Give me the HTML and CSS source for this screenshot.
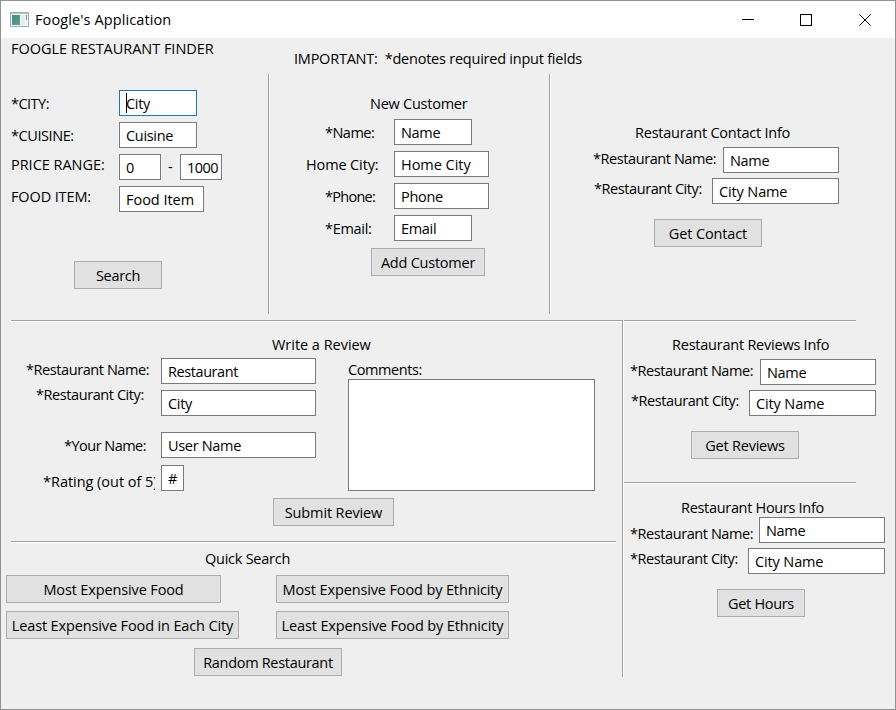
FILE: index.html
```html
<!DOCTYPE html>
<html lang="en">
<head>
<meta charset="utf-8">
<title>Foogle's Application</title>
<link rel="stylesheet" href="styles.css">
</head>
<body>
<div class="window">
  <header class="titlebar">
    <svg class="app-icon" width="19" height="15" viewBox="0 0 19 15">
      <defs><linearGradient id="g" x1="0" y1="0" x2="1" y2="1"><stop offset="0" stop-color="#3f8d86"/><stop offset="1" stop-color="#5f9f8c"/></linearGradient></defs>
      <rect x="0.5" y="0.5" width="18" height="14" fill="#f4f7f8" stroke="#a3abb0"/>
      <rect x="1" y="1" width="17" height="1" fill="#b9c6cc"/>
      <rect x="2" y="3" width="8" height="10" fill="url(#g)"/>
      <rect x="11" y="3" width="4" height="10" fill="#e6eeee"/>
      <rect x="16" y="3" width="1" height="5" fill="#5b978f"/>
    </svg>
    <span class="title">Foogle's Application</span>
    <svg class="controls" width="132" height="14" viewBox="0 0 132 14" fill="none" stroke="#000" stroke-width="1">
      <path d="M0 6.5H12" shape-rendering="crispEdges"/>
      <rect x="58.5" y="1.5" width="11" height="11" shape-rendering="crispEdges"/>
      <path d="M117.3 1.3L128.7 12.7M128.7 1.3L117.3 12.7"/>
    </svg>
  </header>

  <main class="content">
    <section class="top">
      <div class="finder">
        <h1 class="s0">FOOGLE RESTAURANT FINDER</h1>
        <div class="row"><label class="s5">*CITY:</label><span class="focus"><input class="w78 s3" value="City"><i class="caret"></i></span></div>
        <div class="row"><label class="s4">*CUISINE:</label><input class="w78 s3" value="Cuisine"></div>
        <div class="row up"><label class="s0">PRICE RANGE:</label><input class="w42" value="0"><span class="dash">-</span><input class="w42 s5 max" value="1000"></div>
        <div class="row up"><label class="s1">FOOD ITEM:</label><input class="w85 s0" value="Food Item"></div>
        <button class="w88 s3 search">Search</button>
      </div>
      <div class="rest">
        <p class="notice">IMPORTANT:&nbsp; *denotes required input fields</p>
        <div class="panels">
          <div class="customer">
            <h2 class="s2">New Customer</h2>
            <div class="row"><label class="in s5">*Name:</label><input class="w78 s3" value="Name"></div>
            <div class="row"><label class="s1">Home City:</label><input class="w95 s0" value="Home City"></div>
            <div class="row"><label class="in s6">*Phone:</label><input class="w95 s3" value="Phone"></div>
            <div class="row"><label class="in s3">*Email:</label><input class="w78 s3" value="Email"></div>
            <button class="w114">Add Customer</button>
          </div>
          <div class="info contact">
            <h2>Restaurant Contact Info</h2>
            <div class="row"><label class="s4">*Restaurant Name:</label><input class="w116 s3" value="Name"></div>
            <div class="row"><label class="s4 city">*Restaurant City:</label><input class="w127 s1" value="City Name"></div>
            <button class="w108 s1">Get Contact</button>
          </div>
        </div>
      </div>
    </section>

    <section class="bottom">
      <div class="left">
        <div class="review">
          <h2 class="s0">Write a Review</h2>
          <div class="review-body">
            <div class="fields">
              <div class="row r1"><label class="s4">*Restaurant Name:</label><input class="w155 s4" value="Restaurant"></div>
              <div class="row r2"><label class="s4">*Restaurant City:</label><input class="w155 s3" value="City"></div>
              <div class="row r3"><label class="s5">*Your Name:</label><input class="w155 s3" value="User Name"></div>
              <div class="row r4"><label class="s0">*Rating (out of 5)</label><input class="w23" value="#"></div>
            </div>
            <div class="comments">
              <label class="s4">Comments:</label>
              <textarea></textarea>
            </div>
          </div>
          <button class="w121 s1">Submit Review</button>
        </div>
        <div class="quick">
          <h2 class="s2">Quick Search</h2>
          <div class="quick-grid">
            <button class="w215 s1">Most Expensive Food</button>
            <button class="w233 s1">Most Expensive Food by Ethnicity</button>
            <button class="w233 s1">Least Expensive Food in Each City</button>
            <button class="w233 s1">Least Expensive Food by Ethnicity</button>
          </div>
          <button class="w148 s3 random">Random Restaurant</button>
        </div>
      </div>
      <div class="right">
        <div class="info reviews">
          <h2>Restaurant Reviews Info</h2>
          <div class="row"><label class="s4">*Restaurant Name:</label><input class="w116 s3" value="Name"></div>
          <div class="row"><label class="s4 city">*Restaurant City:</label><input class="w127 s1" value="City Name"></div>
          <button class="w108">Get Reviews</button>
        </div>
        <div class="info hours">
          <h2 class="s3">Restaurant Hours Info</h2>
          <div class="row"><label class="s4">*Restaurant Name:</label><input class="w126 s3" value="Name"></div>
          <div class="row"><label class="s4">*Restaurant City:</label><input class="w137 s1" value="City Name"></div>
          <button class="w88 s3">Get Hours</button>
        </div>
      </div>
    </section>
  </main>
</div>
</body>
</html>
```
FILE: styles.css
```css
* { box-sizing: border-box; }

body {
  margin: 0;
  font: 14.5px/20px "Open Sans", sans-serif;
  letter-spacing: -0.23px;
  color: #000;
}

.window {
  width: 896px;
  height: 710px;
  border: 1px solid #919191;
  background: #efefef;
  display: flex;
  flex-direction: column;
}

/* Title bar */
.titlebar {
  height: 37px;
  flex: none;
  background: #fff;
  display: flex;
  align-items: center;
  padding: 0 19px 0 9px;
}
.app-icon { flex: none; margin-right: 6px; }
.title { flex: 1; letter-spacing: 0.11px; }
.controls { flex: none; margin-right: 2px; }

/* Text and controls */
h1, h2, p { margin: 0; font-size: inherit; font-weight: normal; white-space: pre; }
label { flex: none; white-space: pre; }
input, button, textarea {
  flex: none;
  display: block;
  margin: 0;
  font: inherit;
  color: inherit;
  letter-spacing: inherit;
  border-radius: 0;
  outline: 0;
}
input {
  height: 26px;
  padding: 0 0 0 6px;
  border: 1px solid #7a7a7a;
  background: #fff;
}
textarea { border: 1px solid #7a7a7a; background: #fff; resize: none; }
button {
  height: 28px;
  padding: 2px 0 0;
  border: 1px solid #adadad;
  background: #e1e1e1;
  white-space: nowrap;
}
.row { display: flex; height: 26px; align-items: flex-start; }

/* Letter spacing steps */
.s0 { letter-spacing: -0.03px; }
.s1 { letter-spacing: -0.13px; }
.s2 { letter-spacing: -0.25px; }
.s3 { letter-spacing: -0.31px; }
.s4 { letter-spacing: -0.42px; }
.s5 { letter-spacing: -0.52px; }
.s6 { letter-spacing: -0.72px; }

/* Control widths */
.w23 { width: 23px; }
.w42 { width: 42px; }
.w78 { width: 78px; }
.w85 { width: 85px; }
.w88 { width: 88px; }
.w95 { width: 95px; }
.w108 { width: 108px; }
.w114 { width: 114px; }
.w116 { width: 116px; }
.w121 { width: 121px; }
.w126 { width: 126px; }
.w127 { width: 127px; }
.w137 { width: 137px; }
.w148 { width: 148px; }
.w155 { width: 155px; }
.w215 { width: 215px; }
.w233 { width: 233px; }

/* Upper half */
.top { display: flex; height: 282px; }

.finder { width: 267px; padding-left: 10px; }
.finder h1 { height: 52px; padding-top: 1px; }
.finder .row { margin-bottom: 6px; }
.finder label { width: 108px; margin-top: 4px; }
.finder .up label { margin-top: 1px; }
.finder .dash { width: 19px; padding-left: 7px; margin-top: 3px; }
.finder .search { margin: 49px 0 0 63px; }
.focus { position: relative; }
.focus input { border-color: #1f74b4; }
.caret { position: absolute; left: 7px; top: 3px; width: 1px; height: 20px; background: #000; }

.rest { flex: 1; }
.notice { height: 25px; margin: 11px 0 0 26px; }
.panels { display: flex; }
.customer {
  width: 281px;
  height: 240px;
  padding: 20px 0 0 37px;
  border-left: 1px solid #a0a0a0;
  box-shadow: inset 1px 0 #fff;
}
.customer h2 { height: 25px; padding-left: 64px; }
.customer .row { margin-bottom: 6px; }
.customer label { width: 88px; margin-top: 4px; }
.customer .in { padding-left: 19px; }
.customer button { margin: 7px 0 0 65px; }

/* Name and city lookup panels */
.info .row { justify-content: space-between; }
.info .row + .row { margin-top: 5px; }
.info button { margin-top: 15px; }

.contact {
  width: 290px;
  height: 240px;
  padding: 49px 0 0 43px;
  border-left: 1px solid #a0a0a0;
  box-shadow: inset 1px 0 #fff;
}
.contact h2 { height: 24px; padding-left: 42px; }
.contact label { margin-top: 2px; }
.contact .city { padding-left: 1px; margin-top: 1px; }
.contact button { margin-left: 61px; }

/* Lower half */
.bottom { display: flex; }
.left { width: 611px; margin-left: 10px; }
.review {
  height: 221px;
  padding-top: 14px;
  border-top: 1px solid #a0a0a0;
  box-shadow: inset 0 1px #fff;
}
.review h2 { height: 23px; padding-left: 261px; }
.review-body { display: flex; }
.fields { width: 337px; }
.fields label { height: 20px; overflow: hidden; }
.r1 label { width: 135px; margin: 2px 0 0 15px; }
.r2 { margin-top: 6px; }
.r2 label { width: 125px; margin: -5px 0 0 25px; }
.r3 { margin-top: 16px; }
.r3 label { width: 97px; margin: 4px 0 0 53px; }
.r4 { margin-top: 7px; }
.r4 label { width: 112px; margin: 7px 6px 0 32px; }
.comments textarea { width: 247px; height: 112px; }
.comments label { display: block; height: 21px; padding-top: 2px; }
.review button { margin: 7px 0 0 262px; }

.quick {
  width: 605px;
  height: 136px;
  padding-top: 7px;
  border-top: 1px solid #a0a0a0;
  box-shadow: inset 0 1px #fff;
}
.quick h2 { height: 26px; padding-left: 194px; }
.quick-grid { display: grid; grid-template-columns: 270px 233px; row-gap: 8px; margin-left: -5px; }
.random { margin: 9px 0 0 183px; }

.right {
  height: 357px;
  width: 263px;
  border-left: 1px solid #a0a0a0;
  box-shadow: inset 1px 0 #fff;
  padding-left: 1px;
}
.reviews, .hours {
  background:
    linear-gradient(#a0a0a0, #a0a0a0) 0 0 / 232px 1px no-repeat,
    linear-gradient(#fff, #fff) 0 1px / 232px 1px no-repeat;
}
.reviews { width: 252px; height: 162px; padding: 15px 0 0 6px; }
.reviews h2 { height: 24px; padding-left: 42px; }
.reviews label { margin-top: 2px; }
.reviews .city { padding-left: 1px; margin-top: 1px; }
.reviews button { margin-left: 61px; }
.hours { width: 261px; padding: 16px 0 0 6px; }
.hours h2 { height: 19px; padding-left: 51px; }
.hours label { margin-top: 7px; }
.hours .row + .row label { margin-top: 1px; }
.hours button { margin-left: 87px; }
```
